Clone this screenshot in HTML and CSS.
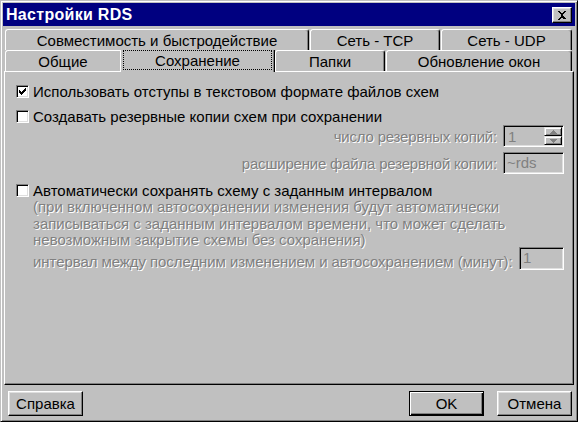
FILE: index.html
```html
<!DOCTYPE html>
<html>
<head>
<meta charset="utf-8">
<link rel="stylesheet" href="styles.css">
</head>
<body>
<div class="window">
  <div class="titlebar">
    <span class="title">Настройки RDS</span>
    <div class="close">
      <svg width="10" height="9" viewBox="0 0 10 9" shape-rendering="crispEdges">
        <path d="M1 0h2v1h1v1h2V1h1V0h2v1H8v1H7v1H6v1h0v1h1v1h1v1h1v1H7V8H6V7H4v1H3v1H1V8h1V7h1V6h1V5H4V3H3V2H2V1H1z" fill="#000"/>
      </svg>
    </div>
  </div>

  <div class="tabs">
    <div class="tabrow">
      <div class="tab t-compat">Совместимость и быстродействие</div>
      <div class="tab t-tcp">Сеть - TCP</div>
      <div class="tab t-udp">Сеть - UDP</div>
    </div>
    <div class="tabrow front">
      <div class="tab t-general">Общие</div>
      <div class="tab t-save selected"><span class="focus">Сохранение</span></div>
      <div class="tab t-folders">Папки</div>
      <div class="tab t-refresh">Обновление окон</div>
    </div>
  </div>

  <div class="panel">
    <div class="cb-row r1">
      <span class="checkbox">
        <svg width="7" height="7" viewBox="0 0 7 7" shape-rendering="crispEdges"><path d="M6 0h1v3H6v1H5v1H4v1H3v1H2V6H1V5H0V2h1v1h1v1h1V3h1V2h1V1h1z" fill="#000"/></svg>
      </span>
      <span class="label">Использовать отступы в текстовом формате файлов схем</span>
    </div>
    <div class="cb-row r2">
      <span class="checkbox"></span>
      <span class="label">Создавать резервные копии схем при сохранении</span>
    </div>
    <div class="field-row spin-row">
      <span class="dis">число резервных копий:</span>
      <div class="spinner">
        <span class="spin-text">1</span>
        <div class="spin-btns">
          <div class="spin-btn"><svg width="7" height="4" viewBox="0 0 7 4"><path d="M3 0h1v1h1v1h1v1h1v1H0V3h1V2h1V1h1z" fill="#808080"/></svg></div>
          <div class="spin-btn"><svg width="7" height="4" viewBox="0 0 7 4"><path d="M0 0h7v1H6v1H5v1H4v1H3V3H2V2H1V1H0z" fill="#808080"/></svg></div>
        </div>
      </div>
    </div>
    <div class="field-row ext-row">
      <span class="dis">расширение файла резервной копии:</span>
      <div class="edit w-ext">~rds</div>
    </div>
    <div class="cb-row r3">
      <span class="checkbox"></span>
      <span class="label">Автоматически сохранять схему с заданным интервалом</span>
    </div>
    <div class="note dis">(при включенном автосохранении изменения будут автоматически<br>записываться с заданным интервалом времени, что может сделать<br>невозможным закрытие схемы без сохранения)</div>
    <div class="interval-row">
      <span class="dis interval-label">интервал между последним изменением и автосохранением (минут):</span>
      <div class="edit w-int">1</div>
    </div>
  </div>

  <div class="buttons">
    <button class="btn">Справка</button>
    <span class="spacer"></span>
    <button class="btn default">OK</button>
    <button class="btn">Отмена</button>
  </div>
</div>
</body>
</html>
```

FILE: styles.css
```css
* { box-sizing: border-box; }
html, body { margin: 0; padding: 0; background: #c0c0c0; }
body {
  font-family: "Liberation Sans", Arial, sans-serif;
  font-size: 15px;
  color: #000;
}
.window {
  width: 578px;
  height: 422px;
  background: #c0c0c0;
  border: 1px solid;
  border-color: #c0c0c0 #000 #000 #c0c0c0;
  box-shadow: inset 1px 1px 0 #fff, inset -1px -1px 0 #808080;
  padding: 2px;
  display: flex;
  flex-direction: column;
}
.titlebar {
  height: 23px;
  background: #000080;
  display: flex;
  align-items: center;
  padding-left: 3px;
  flex: none;
}
.title {
  color: #fff;
  font-weight: bold;
  font-size: 16px;
  flex: 1;
  letter-spacing: 0.3px;
  line-height: 18px;
}
.close {
  width: 20px;
  height: 16px;
  margin-right: 3px;
  background: #c0c0c0;
  border: 1px solid;
  border-color: #fff #000 #000 #fff;
  box-shadow: inset -1px -1px 0 #808080, inset 1px 1px 0 #dfdfdf;
  display: flex;
  align-items: center;
  justify-content: center;
}
.close svg { display: block; margin-top: 1px; }

.tabs {
  margin: 3px 3px 0 2px;
  height: 42px;
  flex: none;
  position: relative;
  z-index: 1;
}
.tabrow {
  display: flex;
  height: 21px;
}
.tab {
  height: 21px;
  background: #c0c0c0;
  border-top: 1px solid #fff;
  border-left: 1px solid #fff;
  border-right: 1px solid #000;
  border-radius: 3px 3px 0 0;
  box-shadow: inset -1px 0 0 #808080;
  display: flex;
  align-items: center;
  justify-content: center;
  line-height: 17px;
  padding-top: 1px;
  flex: none;
  white-space: nowrap;
}
.t-compat { width: 304px; margin-right: 1px; }
.t-tcp { width: 130px; margin-right: 1px; }
.t-udp { width: 131px; }
.t-general { width: 115px; border-right: none; box-shadow: none; border-radius: 3px 0 0 0; }
.t-save { width: 155px; }
.t-folders { width: 110px; margin-right: 1px; }
.t-refresh { width: 186px; }
.tab.selected {
  border-top: none;
  height: 22px;
  border-radius: 0;
  padding: 0 2px 2px 2px;
  align-items: stretch;
}
.focus {
  flex: 1;
  border: 1px dotted #000;
  display: flex;
  align-items: center;
  justify-content: center;
}

.panel {
  margin: 0 1px 0 1px;
  height: 314px;
  flex: none;
  border-top: 1px solid #fff;
  border-left: 1px solid #fff;
  border-right: 1px solid #000;
  border-bottom: 1px solid #000;
  box-shadow: inset -1px -1px 0 #808080;
  padding: 0 9px 0 11px;
  display: flex;
  flex-direction: column;
}
.cb-row {
  display: flex;
  align-items: center;
  height: 17px;
  flex: none;
}
.r1 { margin-top: 11px; }
.r2 { margin-top: 8px; }
.r3 { margin-top: 8px; }
.checkbox {
  width: 13px;
  height: 13px;
  background: #fff;
  border: 1px solid;
  border-color: #808080 #fff #fff #808080;
  box-shadow: inset 1px 1px 0 #000, inset -1px -1px 0 #dfdfdf;
  margin-right: 4px;
  display: flex;
  align-items: center;
  justify-content: center;
  flex: none;
}
.checkbox svg { display: block; }
.label { white-space: nowrap; line-height: 17px; }

.dis {
  color: #808080;
  text-shadow: 1px 1px 0 #fff;
  white-space: nowrap;
}
.field-row {
  display: flex;
  justify-content: flex-end;
  align-items: center;
  height: 22px;
  flex: none;
  gap: 6px;
}
.field-row .dis { letter-spacing: -0.2px; }
.ext-row { margin-top: 5px; }
.spinner, .edit {
  height: 22px;
  border: 1px solid;
  border-color: #808080 #fff #fff #808080;
  box-shadow: inset 1px 1px 0 #000, inset -1px -1px 0 #dfdfdf;
  background: #c0c0c0;
  color: #808080;
  flex: none;
}
.spinner {
  width: 61px;
  display: flex;
  padding: 1px 1px 1px 1px;
}
.spin-text { flex: 1; padding-left: 3px; line-height: 19px; }
.spin-btns { width: 18px; display: flex; flex-direction: column; }
.spin-btn {
  flex: 1;
  background: #c0c0c0;
  border: 1px solid;
  border-color: #dfdfdf #000 #000 #dfdfdf;
  box-shadow: inset 1px 1px 0 #fff, inset -1px -1px 0 #808080;
  display: flex;
  align-items: center;
  justify-content: center;
}
.spin-btn svg { display: block; }
.edit {
  padding: 0 3px;
  line-height: 20px;
}
.w-ext { width: 61px; }
.w-int { width: 45px; }

.note {
  padding-left: 17px;
  line-height: 16.5px;
  flex: none;
}
.interval-row {
  display: flex;
  justify-content: space-between;
  align-items: flex-start;
  padding-left: 17px;
  margin-top: -2px;
  flex: none;
  height: 23px;
}
.interval-row .edit { height: 23px; }
.interval-label { line-height: 16px; margin-top: 7px; letter-spacing: -0.07px; }

.buttons {
  display: flex;
  margin: 6px 3px 0 5px;
  height: 25px;
  flex: none;
}
.spacer { flex: 1; }
.btn {
  width: 75px;
  height: 25px;
  font: inherit;
  color: #000;
  background: #c0c0c0;
  border: 1px solid;
  border-color: #fff #000 #000 #fff;
  box-shadow: inset -1px -1px 0 #808080, inset 1px 1px 0 #dfdfdf;
  padding: 0;
  margin: 0;
}
.btn.default {
  border: 1px solid #000;
  box-shadow: inset 1px 1px 0 #fff, inset -1px -1px 0 #000, inset -2px -2px 0 #808080;
  margin-right: 13px;
}
```
